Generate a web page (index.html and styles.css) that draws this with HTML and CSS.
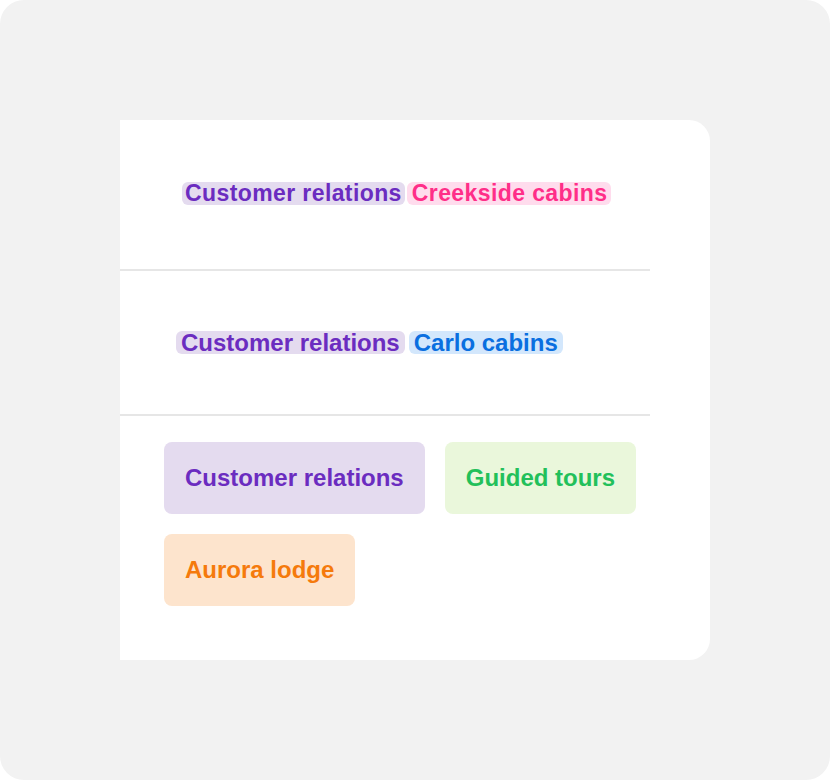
FILE: index.html
```html
<!DOCTYPE html>
<html lang="en">
<head>
    <meta charset="UTF-8">
    <meta name="viewport" content="width=device-width, initial-scale=1.0">
    <title>Tags</title>
    <link rel="stylesheet" href="styles.css">
</head>
<body>
    <div class="frame">
        <div class="card">
            <div class="row row-one">
                <span class="tag tag-sm purple">Customer relations</span>
                <span class="tag tag-sm pink">Creekside cabins</span>
            </div>
            <div class="divider"></div>
            <div class="row row-two">
                <span class="tag tag-md purple">Customer relations</span>
                <span class="tag tag-md blue">Carlo cabins</span>
            </div>
            <div class="divider"></div>
            <div class="row-three">
                <span class="tag tag-lg purple">Customer relations</span>
                <span class="tag tag-lg green">Guided tours</span>
                <span class="tag tag-lg orange">Aurora lodge</span>
            </div>
        </div>
    </div>
</body>
</html>
```

FILE: styles.css
```css
body { margin: 0; background: #fff; font-family: "Liberation Sans", Arial, sans-serif; }
.frame { width: 830px; height: 780px; background: #f2f2f2; border-radius: 24px; padding-top: 120px; padding-left: 120px; box-sizing: border-box; }
.card { width: 590px; height: 540px; background: #fff; border-radius: 0 21px 21px 0; display: flex; flex-direction: column; }
.divider { width: 530px; height: 2px; background: #e6e6e6; }
.row { display: flex; align-items: center; }
.row-one { height: 149px; padding-left: 62px; gap: 2px; padding-bottom: 2px; box-sizing: border-box; }
.row-two { height: 143px; padding-left: 56px; gap: 4px; }
.row-three { display: flex; flex-wrap: wrap; gap: 20px; width: 490px; padding: 26px 0 0 44px; }

.tag { display: inline-block; font-weight: bold; white-space: nowrap; }
.tag-sm { font-size: 23px; letter-spacing: 0.4px; line-height: 23px; padding: 0 3px; border-radius: 6px; }
.tag-sm.pink { padding: 0 4px 0 5px; }
.tag-md { font-size: 24px; line-height: 23px; padding: 0 5px; border-radius: 6px; }
.tag-lg { font-size: 24px; line-height: 24px; padding: 24px 21px; border-radius: 8px; }

.purple { color: #6b2cc0; background: #e4dbef; }
.pink { color: #ff2e88; background: #ffdced; }
.blue { color: #0a6fe0; background: #d3e7fc; }
.green { color: #22c05a; background: #eaf7db; }
.orange { color: #f57a0c; background: #fde4cd; }
```
